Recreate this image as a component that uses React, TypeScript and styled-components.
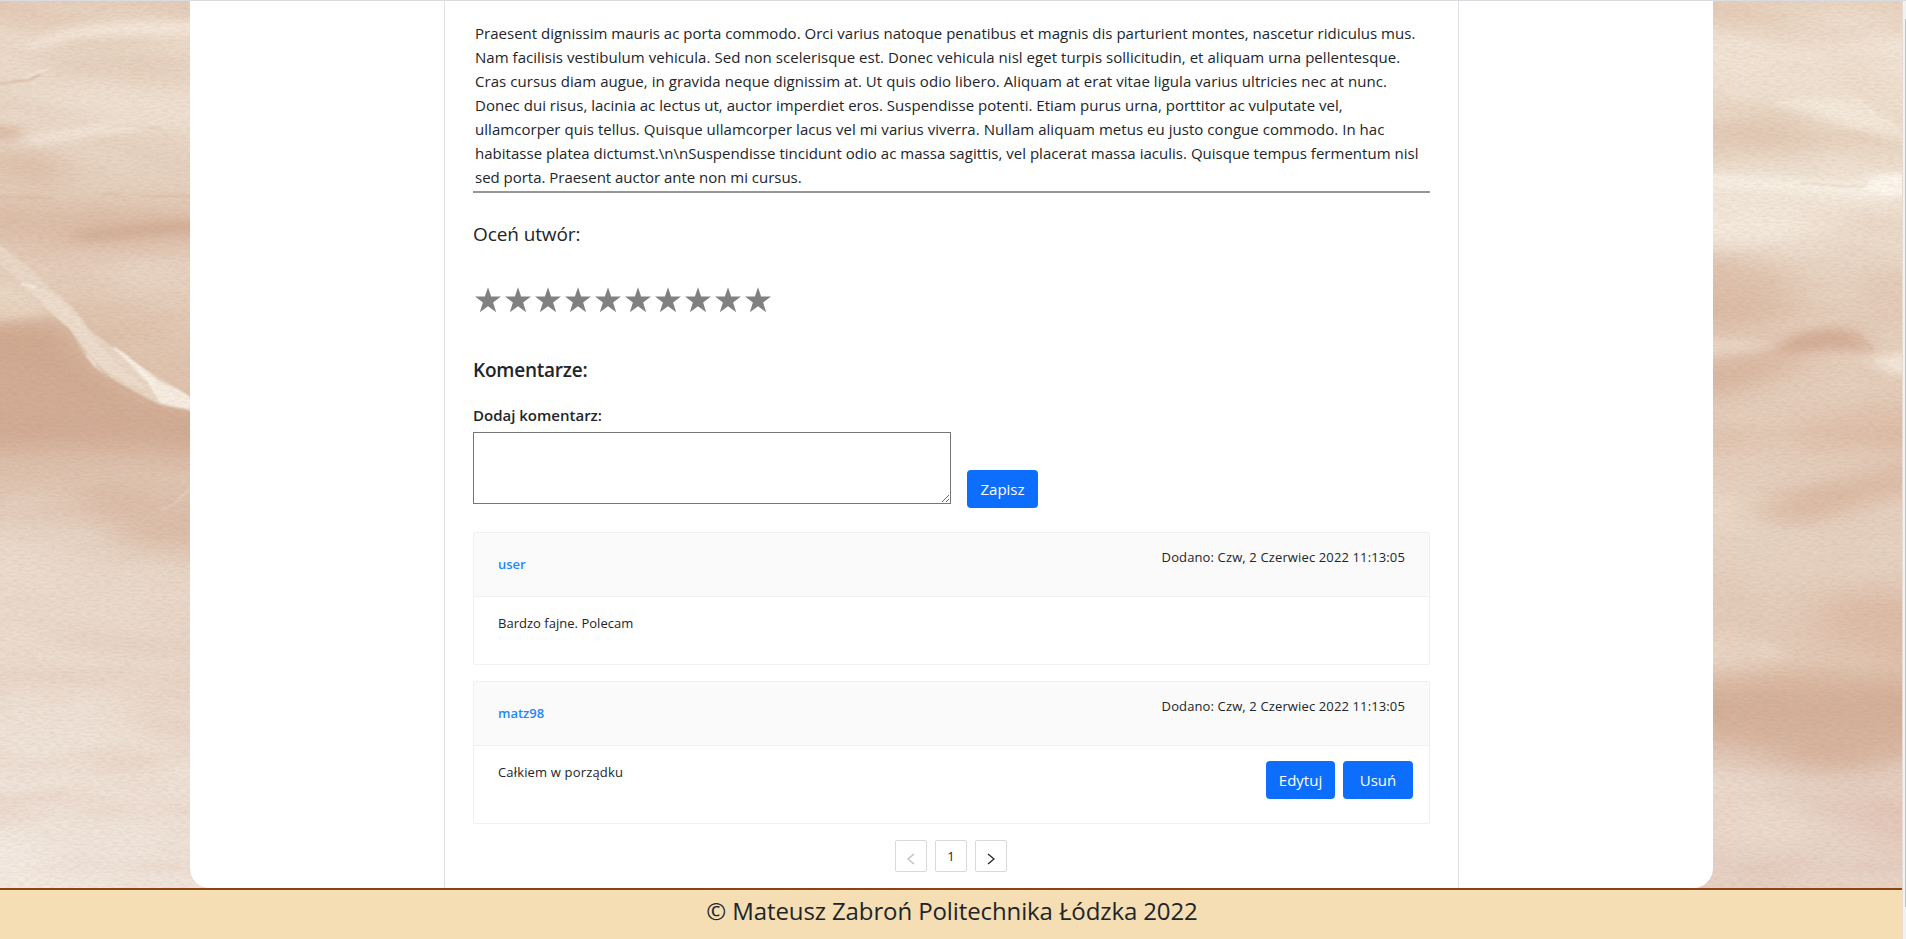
import React from "react";
import styled, { createGlobalStyle } from "styled-components";

const GlobalStyle = createGlobalStyle`
  *, *::before, *::after { box-sizing: border-box; }
  body {
    margin: 0;
    overflow: hidden;
    font-family: "Open Sans", "Noto Sans", sans-serif;
    font-size: 15px;
    line-height: 24px;
    color: #212529;
    background: #fff;
  }
`;

const Window = styled.div`
  display: flex;
  width: 1906px;
  height: 939px;
  overflow: hidden;
`;

const Page = styled.div`
  display: flex;
  flex-direction: column;
  width: 1902px;
`;

const Main = styled.main`
  position: relative;
  display: flex;
  justify-content: center;
  height: 888px;
  border-top: 1px solid #dadbde;
`;

const Backdrop = styled.svg`
  position: absolute;
  inset: 0;
  width: 1902px;
  height: 887px;
`;

const Panel = styled.div`
  position: relative;
  display: flex;
  justify-content: center;
  width: 1523px;
  margin-left: 1px;
  background: #fff;
  border-radius: 0 0 20px 20px;
`;

const Column = styled.section`
  display: flex;
  flex-direction: column;
  width: 1015px;
  padding: 20px 28px 0;
  border: solid #dee2e6;
  border-width: 0 1px;
`;

const Story = styled.p`
  margin: 0;
  padding: 0 2px 2px;
  border-bottom: 2px solid #979797;
`;

const Line = styled.span<{ $track: number }>`
  display: block;
  white-space: nowrap;
  letter-spacing: ${(p) => p.$track}px;
`;

const RateTitle = styled.h5`
  margin: 26px 0 0;
  font-size: 19px;
  font-weight: 400;
  line-height: 30px;
  letter-spacing: -0.1px;
`;

const Stars = styled.div`
  display: flex;
  gap: 4px;
  margin-top: 38px;
  padding-left: 2px;
`;

const StarIcon = styled.svg`
  width: 26px;
  height: 26px;
  fill: #808080;
`;

const CommentsTitle = styled.h5`
  margin: 42px 0 0;
  font-size: 19px;
  font-weight: 600;
  line-height: 30px;
  letter-spacing: -0.22px;
`;

const Label = styled.label`
  margin-top: 18px;
  font-weight: 600;
`;

const CommentForm = styled.div`
  display: flex;
  align-items: flex-end;
  gap: 16px;
  height: 76px;
  margin-top: 5px;
`;

const CommentInput = styled.textarea`
  align-self: flex-start;
  width: 478px;
  height: 72px;
  padding: 2px;
  border: 1px solid #767676;
  border-radius: 0;
  font: inherit;
  resize: both;
`;

const Button = styled.button<{ $width: number }>`
  width: ${(p) => p.$width}px;
  height: 38px;
  padding: 0;
  border: 0;
  border-radius: 4px;
  background: #0d6efd;
  color: #fff;
  font: inherit;
`;

const CommentList = styled.div`
  display: flex;
  flex-direction: column;
  gap: 16px;
  margin-top: 24px;
  font-size: 13px;
  line-height: 22px;
`;

const Card = styled.article<{ $height: number }>`
  height: ${(p) => p.$height}px;
  border: 1px solid #f0f0f0;
  border-radius: 2px;
`;

const CardHeader = styled.header`
  display: flex;
  justify-content: space-between;
  height: 64px;
  padding: 13px 24px 0;
  border-bottom: 1px solid #f0f0f0;
  background: #fafafa;
`;

const Author = styled.a`
  margin-top: 7px;
  color: #1f87ff;
  font-weight: 600;
`;

const Added = styled.span`
  letter-spacing: 0.13px;
`;

const CardBody = styled.div`
  display: flex;
  justify-content: space-between;
  padding: 15px 16px 0 24px;
`;

const CommentText = styled.span<{ $track: number }>`
  letter-spacing: ${(p) => p.$track}px;
`;

const Actions = styled.div`
  display: flex;
  gap: 8px;
  font-size: 15px;
`;

const Pager = styled.nav`
  display: flex;
  justify-content: center;
  gap: 8px;
  margin-top: 16px;
  padding-right: 1px;
`;

const PageButton = styled.button<{ $disabled?: boolean }>`
  display: flex;
  align-items: center;
  justify-content: center;
  width: 32px;
  height: 32px;
  padding: 0;
  border: 1px solid #d9d9d9;
  border-radius: 2px;
  background: #fff;
  font-family: inherit;
  font-size: 13px;
  line-height: 22px;
  color: ${(p) => (p.$disabled ? "#bfbfbf" : "#262626")};
`;

const Arrow = styled.svg`
  width: 8px;
  height: 12px;
  margin-top: 6px;
  fill: none;
  stroke: currentColor;
  stroke-width: 1.3;
`;

const Footer = styled.footer`
  height: 51px;
  padding: 3px 0 0 2px;
  border-top: 2px solid #8b4513;
  background: #f5deb3;
  font-size: 24px;
  line-height: 36px;
  letter-spacing: -0.11px;
  text-align: center;
`;

const ScrollRail = styled.div`
  display: flex;
  justify-content: flex-end;
  width: 4px;
  border-left: 1px solid #e6dad3;
  border-top: 1px solid #dadbde;
  background: #f1f1f1;
`;

const ScrollThumb = styled.div`
  width: 1px;
  height: 888px;
  margin-top: 18px;
  background: #c1c1c1;
`;

const storyLines: { text: string; track: number }[] = [
  { text: "Praesent dignissim mauris ac porta commodo. Orci varius natoque penatibus et magnis dis parturient montes, nascetur ridiculus mus.", track: 0.02 },
  { text: "Nam facilisis vestibulum vehicula. Sed non scelerisque est. Donec vehicula nisl eget turpis sollicitudin, et aliquam urna pellentesque.", track: 0.043 },
  { text: "Cras cursus diam augue, in gravida neque dignissim at. Ut quis odio libero. Aliquam at erat vitae ligula varius ultricies nec at nunc.", track: 0.07 },
  { text: "Donec dui risus, lacinia ac lectus ut, auctor imperdiet eros. Suspendisse potenti. Etiam purus urna, porttitor ac vulputate vel,", track: 0.02 },
  { text: "ullamcorper quis tellus. Quisque ullamcorper lacus vel mi varius viverra. Nullam aliquam metus eu justo congue commodo. In hac", track: 0.043 },
  { text: "habitasse platea dictumst.\\n\\nSuspendisse tincidunt odio ac massa sagittis, vel placerat massa iaculis. Quisque tempus fermentum nisl", track: 0.023 },
  { text: "sed porta. Praesent auctor ante non mi cursus.", track: -0.02 },
];

const comments = [
  { author: "user", text: "Bardzo fajne. Polecam", track: 0.02, height: 133, own: false },
  { author: "matz98", text: "Całkiem w porządku", track: 0.16, height: 143, own: true },
];

/* Creased sepia paper that shows on both sides of the panel. */
const PaperBackdrop = () => (
  <Backdrop viewBox="0 1 1902 887" preserveAspectRatio="none" colorInterpolationFilters="sRGB">
    <defs>
      <linearGradient id="leftTone" x1="0" y1="0" x2="0" y2="1">
        <stop offset="0" stopColor="#e4cebb" />
        <stop offset="0.04" stopColor="#ecdccc" />
        <stop offset="0.15" stopColor="#eadaca" />
        <stop offset="0.23" stopColor="#e3cdba" />
        <stop offset="0.3" stopColor="#e6d1c0" />
        <stop offset="0.4" stopColor="#dfc5b0" />
        <stop offset="0.5" stopColor="#e0c7b4" />
        <stop offset="0.58" stopColor="#e6d3c3" />
        <stop offset="0.7" stopColor="#ebdccf" />
        <stop offset="0.85" stopColor="#efe3d9" />
        <stop offset="1" stopColor="#f0e5dc" />
      </linearGradient>
      <linearGradient id="rightTone" x1="0" y1="0" x2="0" y2="1">
        <stop offset="0" stopColor="#e8d5c2" />
        <stop offset="0.05" stopColor="#f2e6d8" />
        <stop offset="0.15" stopColor="#ebdbc9" />
        <stop offset="0.22" stopColor="#f2e7da" />
        <stop offset="0.32" stopColor="#e8d6c5" />
        <stop offset="0.4" stopColor="#e5cfbd" />
        <stop offset="0.5" stopColor="#e4cdbb" />
        <stop offset="0.6" stopColor="#e7d4c4" />
        <stop offset="0.72" stopColor="#e3cbb9" />
        <stop offset="0.8" stopColor="#dec0ac" />
        <stop offset="0.88" stopColor="#e6d2c5" />
        <stop offset="1" stopColor="#e8d4c8" />
      </linearGradient>
      <filter id="wide" x="-50%" y="-50%" width="200%" height="200%"><feGaussianBlur stdDeviation="22 11" /></filter>
      <filter id="mid" x="-50%" y="-50%" width="200%" height="200%"><feGaussianBlur stdDeviation="8 4" /></filter>
      <filter id="fine" x="-20%" y="-20%" width="140%" height="140%"><feGaussianBlur stdDeviation="1" /></filter>
      <filter id="grain" x="0" y="0" width="100%" height="100%">
        <feTurbulence type="fractalNoise" baseFrequency="0.16 0.5" numOctaves="3" seed="7" />
        <feColorMatrix values="0 0 0 0 0.66  0 0 0 0 0.48  0 0 0 0 0.36  0.8 0 0 0 -0.3" />
      </filter>
      <filter id="mottle" x="0" y="0" width="100%" height="100%">
        <feTurbulence type="fractalNoise" baseFrequency="0.006 0.024" numOctaves="3" seed="12" />
        <feColorMatrix values="0 0 0 0 0.8  0 0 0 0 0.62  0 0 0 0 0.5  1.6 0 0 0 -0.66" />
      </filter>
      <clipPath id="leftClip"><rect x="0" y="0" width="214" height="889" /></clipPath>
      <clipPath id="rightClip"><rect x="-24" y="0" width="214" height="889" /></clipPath>
    </defs>

    <g clipPath="url(#leftClip)">
      <rect width="214" height="889" fill="url(#leftTone)" />
      <rect width="214" height="889" filter="url(#mottle)" opacity="0.25" />
      <g filter="url(#wide)" opacity="0.72">
        <path d="M50 52Q120 62 214 62V76Q110 82 40 68Z" fill="#dcbfa9" opacity="0.7" />
        <path d="M50 85Q130 75 214 95V150Q120 135 60 108Z" fill="#f4e9dc" opacity="0.6" />
        <path d="M-10 150Q35 148 70 165L50 188L0 180Z" fill="#d3ae96" opacity="0.8" />
        <path d="M-40 205Q100 205 254 220V240Q90 262 -40 236Z" fill="#d6b39c" opacity="0.8" />
        <path d="M100 262Q150 262 254 275V300L120 292Z" fill="#ecdccd" opacity="0.7" />
        <path d="M-40 325L60 322L95 368L150 404L254 418V456Q100 445 -40 450Z" fill="#cba188" opacity="0.95" />
        <path d="M-40 440Q80 445 254 440V470Q100 480 -40 500Z" fill="#d4b09a" opacity="0.5" />
        <path d="M70 490Q140 485 254 500V570L130 545Z" fill="#cfa78f" opacity="0.6" />
        <path d="M-40 510Q40 530 80 590L-40 610Z" fill="#efe2d6" opacity="0.6" />
        <path d="M60 625Q130 645 254 635V655Q130 665 60 640Z" fill="#d9bca8" opacity="0.6" />
        <path d="M120 690Q160 715 254 735V755L150 735Z" fill="#dec3b1" opacity="0.7" />
        <path d="M-40 820Q80 850 140 930H-40Z" fill="#f8f1ea" opacity="0.8" />
      </g>
      <g filter="url(#mid)" opacity="0.8">
        <path d="M20 50Q50 28 95 25Q150 20 234 22V34Q120 34 75 38Q40 48 20 50Z" fill="#f8f1e5" opacity="0.9" />
        <path d="M20 138Q80 129 128 122L145 127Q80 137 32 145Z" fill="#f8f0e5" opacity="0.85" />
        <path d="M-15 126L18 127L24 138L-15 140Z" fill="#cfa58d" opacity="0.7" />
        <path d="M70 233Q130 223 234 218V229Q140 237 80 242Z" fill="#c89d84" opacity="0.55" />
        <path d="M-20 280L25 287L52 314Q20 320 -20 320Z" fill="#ecdccb" opacity="0.8" />
        <path d="M-30 325L60 320L90 362L150 402L234 418V430Q120 420 60 375L-30 350Z" fill="#cca48c" opacity="0.4" />
      </g>
      <g filter="url(#fine)">
        <path d="M-2 243Q32 268 50 290Q72 302 88 328L112 347L140 366L192 398L205 420L190 411L162 406L138 394L110 378L95 368L82 350L67 326L48 310L32 292L22 284L-2 263Z" fill="#ead9c9" opacity="0.85" />
        <path d="M22 284L36 286Q60 295 76 315L98 345L118 365L150 392L120 379L95 367L70 330L48 310Z" fill="#efe1d2" opacity="0.6" />
        <path d="M115 349Q145 368 160 382L178 389L214 412L190 410L160 403L148 383Z" fill="#f8f1e6" opacity="0.85" />
        <path d="M68 328L88 355L112 380L155 404L190 411" stroke="#c09780" strokeWidth="1.2" fill="none" opacity="0.5" />
        <path d="M21 284L35 287M86 355L95 364M114 348Q136 360 152 384" stroke="#fffaf0" strokeWidth="1.6" fill="none" opacity="0.9" />
        <path d="M0 84L18 81L29 80L40 74" stroke="#c99e84" strokeWidth="1.1" fill="none" opacity="0.9" />
        <path d="M24 78L34 74L48 69" stroke="#f9f1e6" strokeWidth="2" fill="none" opacity="0.7" />
        <path d="M108 128Q130 121 140 127L160 128L176 145" stroke="#d4b49e" strokeWidth="1" fill="none" opacity="0.45" />
        <path d="M0 197L52 198M103 194L118 194L126 201M140 196H214" stroke="#c8a18a" strokeWidth="1" fill="none" opacity="0.55" />
        <path d="M160 510Q174 507 180 498L190 489" stroke="#f6eadf" strokeWidth="1.3" fill="none" opacity="0.5" />
      </g>
      <rect width="214" height="889" filter="url(#grain)" opacity="0.3" />
    </g>

    <g transform="translate(1713 0)">
      <g clipPath="url(#rightClip)">
        <rect x="-24" width="214" height="889" fill="url(#rightTone)" />
        <rect x="-24" width="214" height="889" filter="url(#mottle)" opacity="0.25" />
        <g filter="url(#wide)" opacity="0.72">
          <path d="M-44 0H80V14Q20 24 -44 20Z" fill="#e0c5ae" opacity="0.7" />
          <path d="M-44 130Q50 112 85 120L105 158Q40 150 -44 150Z" fill="#d6b49c" opacity="0.65" />
          <path d="M-44 205Q60 220 120 205V235Q30 250 -44 242Z" fill="#faf3e9" opacity="0.8" />
          <path d="M-44 252Q30 255 70 275Q100 300 60 325L-44 338Z" fill="#d4ae96" opacity="0.7" />
          <path d="M140 255Q180 270 234 310V335L150 320Z" fill="#dfc3b0" opacity="0.7" />
          <path d="M-44 372L60 350L110 350L40 385L-44 405Z" fill="#cda087" opacity="0.8" />
          <path d="M90 425Q140 410 234 410V445L90 450Z" fill="#d8b49d" opacity="0.7" />
          <path d="M60 505Q90 490 130 480L230 462V480L110 515L65 525Z" fill="#d0a78e" opacity="0.75" />
          <path d="M-44 480Q20 490 50 530L-44 530Z" fill="#f4eadc" opacity="0.7" />
          <path d="M110 595Q160 585 234 600V670Q150 660 100 630Z" fill="#d5ab95" opacity="0.6" />
          <path d="M-44 635Q20 625 55 650L70 665L-44 675Z" fill="#eee0d0" opacity="0.8" />
          <path d="M-44 692Q60 675 234 690V745Q110 785 60 755L-44 730Z" fill="#cb9e85" opacity="0.65" />
          <path d="M-44 760Q50 770 80 800L120 830L60 850L-44 830Z" fill="#efe2d6" opacity="0.7" />
          <path d="M130 790Q170 800 234 810V850L140 830Z" fill="#e1beb0" opacity="0.6" />
        </g>
        <g filter="url(#mid)" opacity="0.8">
          <path d="M60 103Q130 88 160 112L209 138V146Q140 130 90 112Z" fill="#f8f0e4" opacity="0.8" />
          <path d="M-44 172Q70 180 150 182L165 174L220 172V194L150 198Q70 190 -44 186Z" fill="#fbf5eb" opacity="0.9" />
          <path d="M56 354L85 334Q110 326 138 330L164 352L120 350Z" fill="#cb9e86" opacity="0.75" />
          <path d="M155 358L210 350V376L175 374Z" fill="#f6ede1" />
          <path d="M-20 340Q40 336 65 346L30 351L-20 356Z" fill="#eddccd" opacity="0.8" />
          <path d="M40 640L80 658L50 656Z" fill="#f2e6d8" opacity="0.6" />
        </g>
        <g filter="url(#fine)">
          <path d="M62 104L80 101M138 97Q150 100 160 115L183 127" stroke="#fff8ee" strokeWidth="1.6" fill="none" opacity="0.5" />
          <path d="M140 131L152 140M88 183L130 186L150 187L165 176" stroke="#d3b299" strokeWidth="1" fill="none" opacity="0.55" />
          <path d="M158 178Q168 172 192 175V195L172 196L150 188Z" fill="#fffaf1" opacity="0.6" />
          <path d="M138 331Q152 338 159 350" stroke="#c79b82" strokeWidth="1.2" fill="none" opacity="0.35" />
        </g>
        <rect x="-24" width="214" height="889" filter="url(#grain)" opacity="0.3" />
      </g>
    </g>
  </Backdrop>
);

const Star = () => (
  <StarIcon viewBox="0 0 26 26">
    <path d="M13 0.3L16.1 9.6H26L18.1 15.5L21.2 25.2L13 19.3L4.8 25.2L7.9 15.5L0 9.6H9.9Z" />
  </StarIcon>
);

export default function App() {
  return (
    <Window>
      <GlobalStyle />
      <Page>
        <Main>
          <PaperBackdrop />
          <Panel>
            <Column>
              <Story>
                {storyLines.map((line) => (
                  <Line key={line.text} $track={line.track}>{line.text}</Line>
                ))}
              </Story>
              <RateTitle>Oceń utwór:</RateTitle>
              <Stars>
                {Array.from({ length: 10 }, (_, i) => <Star key={i} />)}
              </Stars>
              <CommentsTitle>Komentarze:</CommentsTitle>
              <Label htmlFor="comment">Dodaj komentarz:</Label>
              <CommentForm>
                <CommentInput id="comment" />
                <Button $width={71}>Zapisz</Button>
              </CommentForm>
              <CommentList>
                {comments.map((comment) => (
                  <Card key={comment.author} $height={comment.height}>
                    <CardHeader>
                      <Author>{comment.author}</Author>
                      <Added>Dodano: Czw, 2 Czerwiec 2022 11:13:05</Added>
                    </CardHeader>
                    <CardBody>
                      <CommentText $track={comment.track}>{comment.text}</CommentText>
                      {comment.own && (
                        <Actions>
                          <Button $width={69}>Edytuj</Button>
                          <Button $width={70}>Usuń</Button>
                        </Actions>
                      )}
                    </CardBody>
                  </Card>
                ))}
              </CommentList>
              <Pager>
                <PageButton $disabled>
                  <Arrow viewBox="0 0 8 12"><path d="M7 1L1 6L7 11" /></Arrow>
                </PageButton>
                <PageButton>1</PageButton>
                <PageButton>
                  <Arrow viewBox="0 0 8 12"><path d="M1 1L7 6L1 11" /></Arrow>
                </PageButton>
              </Pager>
            </Column>
          </Panel>
        </Main>
        <Footer>© Mateusz Zabroń Politechnika Łódzka 2022</Footer>
      </Page>
      <ScrollRail>
        <ScrollThumb />
      </ScrollRail>
    </Window>
  );
}
